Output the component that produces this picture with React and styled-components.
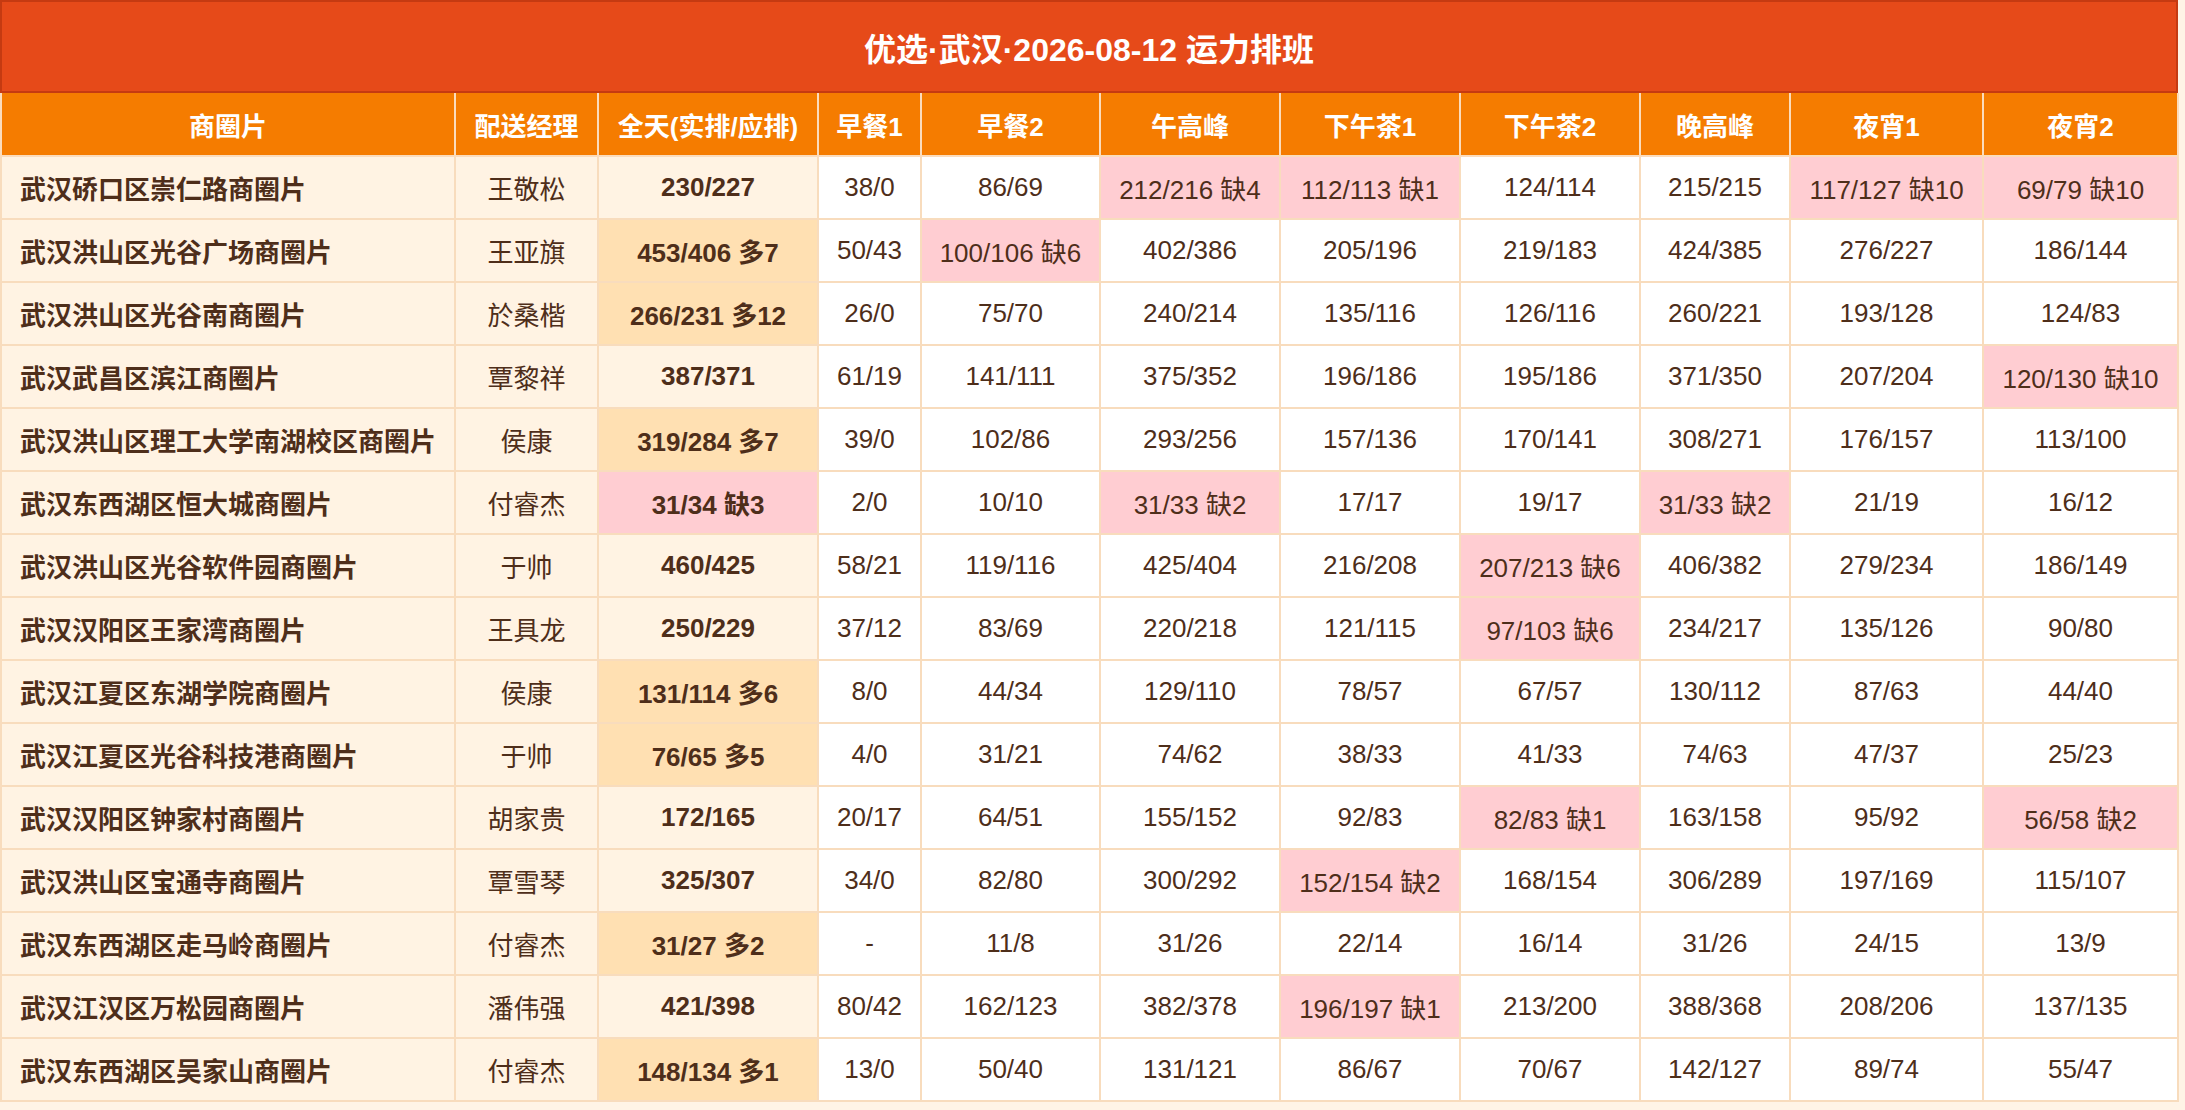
import React from 'react';
import styled, { createGlobalStyle } from 'styled-components';

const GlobalStyle = createGlobalStyle`
  html, body {
    margin: 0;
    padding: 0;
    background: #fff4e6;
  }
  body {
    font-family: 'Liberation Sans', 'Noto Sans CJK SC', sans-serif;
    color: #4e2e1a;
  }
`;

const Sheet = styled.div`
  width: 2178px;
`;

const Title = styled.div`
  height: 89px;
  display: flex;
  align-items: center;
  justify-content: center;
  background: #e64a19;
  border: 2px solid #c53a11;
  color: #ffffff;
  font-size: 32px;
  font-weight: bold;
`;

const Table = styled.table`
  width: 2178px;
  table-layout: fixed;
  border-collapse: collapse;
  font-size: 26px;
`;

const Head = styled.th`
  height: 62px;
  padding: 0;
  background: #f57c00;
  color: #ffffff;
  font-weight: bold;
  text-align: center;
  border: 2px solid #fbdcbc;
  border-top: none;
  white-space: nowrap;
`;

const tones = {
  plain: '#ffffff',
  base: '#fff3e3',
  over: '#ffe0b2',
  short: '#ffcdd2',
};

const Cell = styled.td`
  height: 61px;
  padding: 0 ${(p) => (p.$left ? '18px' : '0')};
  background: ${(p) => tones[p.$tone]};
  text-align: ${(p) => (p.$left ? 'left' : 'center')};
  font-weight: ${(p) => (p.$bold ? 'bold' : 'normal')};
  border: 2px solid #f8dcbd;
  white-space: nowrap;
`;

const widths = [454, 143, 220, 103, 179, 180, 180, 180, 150, 193, 195];

const heads = ['商圈片', '配送经理', '全天(实排/应排)', '早餐1', '早餐2', '午高峰', '下午茶1', '下午茶2', '晚高峰', '夜宵1', '夜宵2'];

const rows = [
  ['武汉硚口区崇仁路商圈片', '王敬松', '230/227', '38/0', '86/69', '212/216 缺4', '112/113 缺1', '124/114', '215/215', '117/127 缺10', '69/79 缺10'],
  ['武汉洪山区光谷广场商圈片', '王亚旗', '453/406 多7', '50/43', '100/106 缺6', '402/386', '205/196', '219/183', '424/385', '276/227', '186/144'],
  ['武汉洪山区光谷南商圈片', '於桑楷', '266/231 多12', '26/0', '75/70', '240/214', '135/116', '126/116', '260/221', '193/128', '124/83'],
  ['武汉武昌区滨江商圈片', '覃黎祥', '387/371', '61/19', '141/111', '375/352', '196/186', '195/186', '371/350', '207/204', '120/130 缺10'],
  ['武汉洪山区理工大学南湖校区商圈片', '侯康', '319/284 多7', '39/0', '102/86', '293/256', '157/136', '170/141', '308/271', '176/157', '113/100'],
  ['武汉东西湖区恒大城商圈片', '付睿杰', '31/34 缺3', '2/0', '10/10', '31/33 缺2', '17/17', '19/17', '31/33 缺2', '21/19', '16/12'],
  ['武汉洪山区光谷软件园商圈片', '于帅', '460/425', '58/21', '119/116', '425/404', '216/208', '207/213 缺6', '406/382', '279/234', '186/149'],
  ['武汉汉阳区王家湾商圈片', '王具龙', '250/229', '37/12', '83/69', '220/218', '121/115', '97/103 缺6', '234/217', '135/126', '90/80'],
  ['武汉江夏区东湖学院商圈片', '侯康', '131/114 多6', '8/0', '44/34', '129/110', '78/57', '67/57', '130/112', '87/63', '44/40'],
  ['武汉江夏区光谷科技港商圈片', '于帅', '76/65 多5', '4/0', '31/21', '74/62', '38/33', '41/33', '74/63', '47/37', '25/23'],
  ['武汉汉阳区钟家村商圈片', '胡家贵', '172/165', '20/17', '64/51', '155/152', '92/83', '82/83 缺1', '163/158', '95/92', '56/58 缺2'],
  ['武汉洪山区宝通寺商圈片', '覃雪琴', '325/307', '34/0', '82/80', '300/292', '152/154 缺2', '168/154', '306/289', '197/169', '115/107'],
  ['武汉东西湖区走马岭商圈片', '付睿杰', '31/27 多2', '-', '11/8', '31/26', '22/14', '16/14', '31/26', '24/15', '13/9'],
  ['武汉江汉区万松园商圈片', '潘伟强', '421/398', '80/42', '162/123', '382/378', '196/197 缺1', '213/200', '388/368', '208/206', '137/135'],
  ['武汉东西湖区吴家山商圈片', '付睿杰', '148/134 多1', '13/0', '50/40', '131/121', '86/67', '70/67', '142/127', '89/74', '55/47'],
];

// 缺 = short of drivers, 多 = more than planned
const toneOf = (text, idx) => {
  if (text.includes('缺')) return 'short';
  if (idx < 3) return text.includes('多') ? 'over' : 'base';
  return 'plain';
};

export default function App() {
  return (
    <Sheet>
      <GlobalStyle />
      <Title>优选·武汉·2026-08-12 运力排班</Title>
      <Table>
        <colgroup>
          {widths.map((w, i) => (
            <col key={i} style={{ width: w }} />
          ))}
        </colgroup>
        <thead>
          <tr>
            {heads.map((h) => (
              <Head key={h}>{h}</Head>
            ))}
          </tr>
        </thead>
        <tbody>
          {rows.map((row) => (
            <tr key={row[0]}>
              {row.map((text, i) => (
                <Cell key={i} $tone={toneOf(text, i)} $left={i === 0} $bold={i === 0 || i === 2}>
                  {text}
                </Cell>
              ))}
            </tr>
          ))}
        </tbody>
      </Table>
    </Sheet>
  );
}
